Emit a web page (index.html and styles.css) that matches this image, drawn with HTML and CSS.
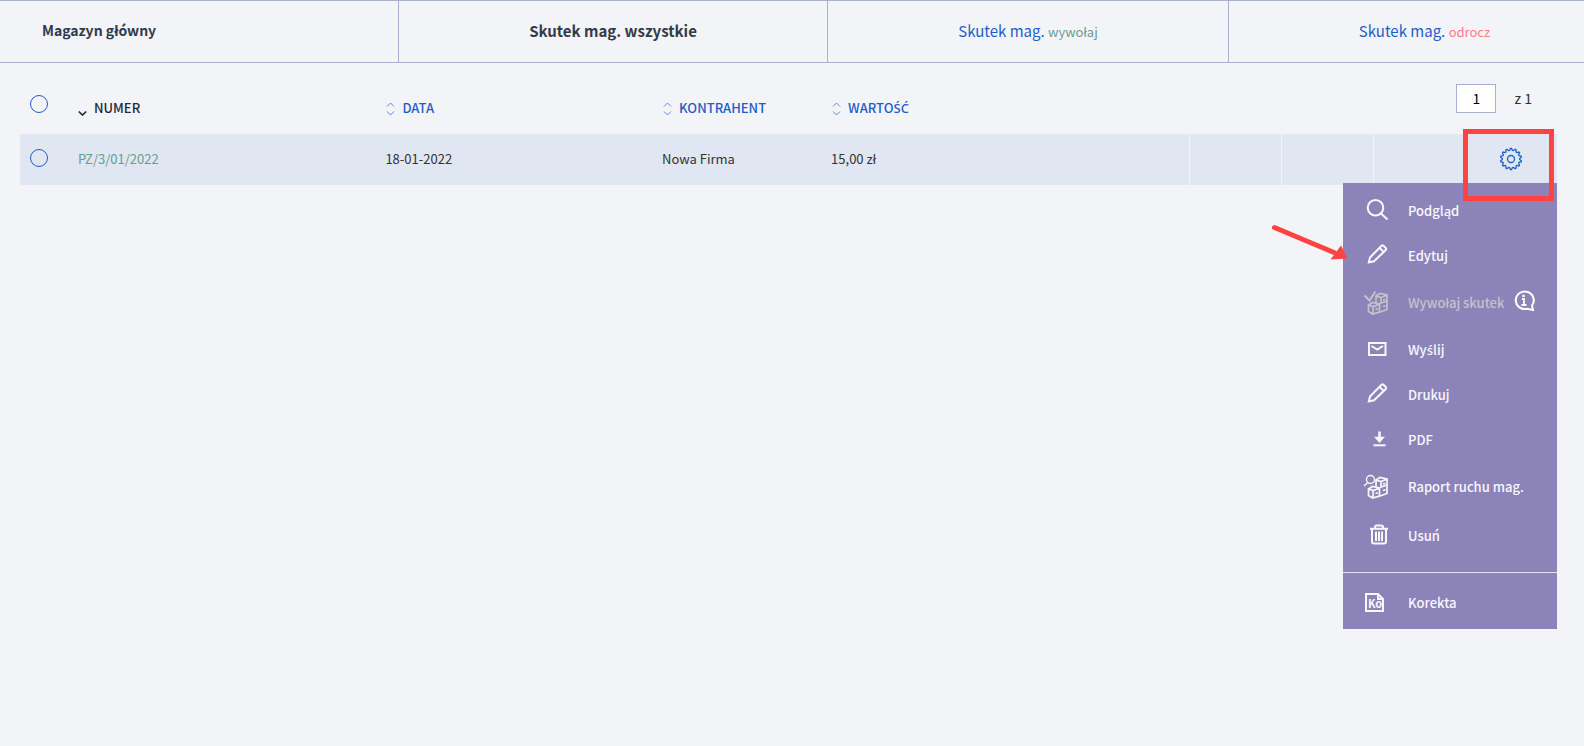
FILE: index.html
```html
<!DOCTYPE html>
<html lang="pl">
<head>
<meta charset="utf-8">
<meta name="viewport" content="width=device-width,initial-scale=1">
<title>Magazyn główny</title>
<link rel="stylesheet" href="styles.css">
</head>
<body>

<nav class="tabs">
    <div class="tab tab-title">Magazyn główny</div>
    <a class="tab active" href="#">Skutek mag. wszystkie</a>
    <a class="tab" href="#"><span>Skutek mag. <small class="green">wywołaj</small></span></a>
    <a class="tab tab-last" href="#"><span>Skutek mag. <small class="pink">odrocz</small></span></a>
</nav>

<main>
<table class="documents">
    <colgroup>
        <col class="col-check">
        <col class="col-number">
        <col class="col-date">
        <col class="col-client">
        <col>
        <col class="col-action">
        <col class="col-action">
        <col class="col-action">
        <col class="col-action">
    </colgroup>
    <thead>
        <tr>
            <th class="check"><input type="checkbox" aria-label="Zaznacz wszystkie"></th>
            <th>
                <button class="sort sorted">
                    <svg width="9" height="14" viewBox="0 0 9 14"><path d="M.8 9.500l3.700 3.500 3.700-3.500" stroke-width="1.700"/></svg>
                    NUMER
                </button>
            </th>
            <th>
                <button class="sort sort-both">
                    <svg width="9" height="14" viewBox="0 0 9 14"><path d="M1 4.500l3.500-3.500 3.500 3.500M1 9.500l3.500 3.500 3.500-3.500"/></svg>
                    DATA
                </button>
            </th>
            <th>
                <button class="sort sort-both">
                    <svg width="9" height="14" viewBox="0 0 9 14"><path d="M1 4.500l3.500-3.500 3.500 3.500M1 9.500l3.500 3.500 3.500-3.500"/></svg>
                    KONTRAHENT
                </button>
            </th>
            <th>
                <button class="sort sort-both">
                    <svg width="9" height="14" viewBox="0 0 9 14"><path d="M1 4.500l3.500-3.500 3.500 3.500M1 9.500l3.500 3.500 3.500-3.500"/></svg>
                    <span>WARTO<span class="accent">ŚĆ</span></span>
                </button>
            </th>
            <td colspan="4">
                <div class="pager">
                    <input type="text" value="1" aria-label="Strona">
                    <span>z 1</span>
                </div>
            </td>
        </tr>
    </thead>
    <tbody>
        <tr>
            <td class="check"><input type="checkbox" aria-label="Zaznacz PZ/3/01/2022"></td>
            <td><a class="green" href="#">PZ/3/01/2022</a></td>
            <td>18-01-2022</td>
            <td>Nowa Firma</td>
            <td>15,00 zł</td>
            <td class="action"></td>
            <td class="action"></td>
            <td class="action"></td>
            <td class="action options">
                <button class="gear" aria-label="Opcje">
                    <svg width="24" height="24" viewBox="0 0 24 24">
                        <circle cx="12" cy="12" r="3.500"/>
                        <path id="gear-teeth" d=""/>
                    </svg>
                </button>
                <div class="menu">
                    <button class="item">
                        <svg class="icon" viewBox="0 0 28 28"><circle cx="12.500" cy="10.800" r="7.800"/><path d="M18 16.500l6.500 6"/></svg>
                        Podgląd
                    </button>
                    <button class="item">
                        <svg class="icon" viewBox="0 0 28 28"><path d="M5.800 20.500l1.200-5L18.500 3.700q1-.8 2 0l2.300 2.300q.8 1 0 2L11 19.300zM16.500 5.800l4.300 4.300"/></svg>
                        Edytuj
                    </button>
                    <button class="item high" disabled>
                        <svg class="icon" viewBox="0 0 28 28">
                            <path d="M1.500 6.500l5 5 6-9"/>
                            <g class="boxes">
                                <path d="M13 13.500V7l4-2.500 7 1.500v14.500l-7 2.500M13 7l5 1.500 6-2.500M18 8.500V14l6-2M20 11l2.500-.8"/>
                                <path d="M5.500 16l4-2.500 7 1.500v8l-7 2-4-2.500zM5.500 16l5 1.500 6-2.500M10 17.500V25M12.500 20.500l2.500-.8M20 17.500l2.500-.8"/>
                            </g>
                        </svg>
                        Wywołaj skutek
                        <svg class="info" viewBox="0 0 22 22"><path d="M19 15.500a9 8.800 0 1 0-5 3.300l6 1.200z"/><path d="M9 9h2v5.500M8.500 15h5" stroke-width="1.800"/><path d="M10.500 4.800v2.200" stroke-width="2.400"/></svg>
                    </button>
                    <button class="item">
                        <svg class="icon" viewBox="0 0 28 28"><path d="M6 7h16.500v12H6zM8.500 10l5.700 3.500 5.800-3.500"/></svg>
                        <span>Wy<span class="accent">ś</span>lij</span>
                    </button>
                    <button class="item">
                        <svg class="icon" viewBox="0 0 28 28"><path d="M5.800 20.500l1.200-5L18.500 3.700q1-.8 2 0l2.300 2.300q.8 1 0 2L11 19.300zM16.500 5.800l4.300 4.300"/></svg>
                        Drukuj
                    </button>
                    <button class="item">
                        <svg class="icon" viewBox="0 0 28 28"><path d="M16.500 5.500v7" stroke-width="2.600"/><path d="M10.500 19.300h12"/><path class="solid" d="M11 10.700h11l-5.500 6.300z"/></svg>
                        PDF
                    </button>
                    <button class="item high">
                        <svg class="icon" viewBox="0 0 28 28">
                            <circle cx="7.500" cy="6.500" r="4" stroke-width="1.400"/><path d="M4.800 9.500L1 13" stroke-width="1.400"/>
                            <g class="boxes">
                                <path d="M13 13.500V7l4-2.500 7 1.500v14.500l-7 2.500M13 7l5 1.500 6-2.500M18 8.500V14l6-2M20 11l2.500-.8"/>
                                <path d="M5.500 16l4-2.500 7 1.500v8l-7 2-4-2.500zM5.500 16l5 1.500 6-2.500M10 17.500V25M12.500 20.500l2.500-.8M20 17.500l2.500-.8"/>
                            </g>
                        </svg>
                        Raport ruchu mag.
                    </button>
                    <button class="item higher">
                        <svg class="icon" viewBox="0 0 28 28"><path d="M7 6.700h18M12 7V5q0-1.500 1.500-1.500h5Q20 3.500 20 5V7M9 7v12.500q0 2 2 2h10q2 0 2-2V7M13 9.500V19M16 9.500V19M19 9.500V19"/></svg>
                        Usuń
                    </button>
                    <hr>
                    <button class="item highest">
                        <svg class="icon" viewBox="0 0 28 28"><path d="M3 5h12l5 5v12H3zM15 5v5h5"/><text x="5" y="19">Ko</text></svg>
                        Korekta
                    </button>
                </div>
                <div class="highlight"></div>
                <svg class="arrow" width="76" height="38" viewBox="0 0 76 38"><path d="M2.500 4.500L62 29.500" stroke-width="5" stroke-linecap="round"/><path class="head" d="M69 22.500L75.500 35.500 58.500 36.500z"/></svg>
            </td>
        </tr>
    </tbody>
</table>
</main>

<script>
// teeth of the gear button
var teeth = 14, d = '';
for (var i = 0; i < teeth * 4; i++) {
    var r = i % 4 < 2 ? 10.5 : 8.7;
    var a = (i - 0.5) / (teeth * 4) * Math.PI * 2 - Math.PI / 2;
    d += (i ? 'L' : 'M') + (12 + r * Math.cos(a)).toFixed(2) + ' ' + (12 + r * Math.sin(a)).toFixed(2);
}
document.getElementById('gear-teeth').setAttribute('d', d + 'z');
</script>
</body>
</html>
```
FILE: styles.css
```css
* {
    box-sizing: border-box;
}
body {
    min-height: 100vh;
    margin: 0;
    background: #f3f4f8;
    color: #333;
    font-family: "Noto Sans CJK JP", "Noto Sans", sans-serif;
    font-size: 13px;
    line-height: 20px;
}
a {
    color: #1e5ec8;
    text-decoration: none;
}
button {
    margin: 0;
    padding: 0;
    border: 0;
    background: none;
    font: inherit;
    cursor: pointer;
}
svg {
    flex: none;
    fill: none;
    stroke: currentColor;
}
.green {
    color: #689e8a;
}
.pink {
    color: #fd7b8a;
}
.accent {
    font-family: "Noto Sans", sans-serif;
}

/* tabs */
.tabs {
    display: grid;
    grid-template-columns: 399fr 429fr 401fr 355fr;
    height: 63px;
    border-top: 1px solid #a6b1cf;
    border-bottom: 1px solid #a6b1cf;
}
.tab {
    display: flex;
    align-items: center;
    justify-content: center;
    border-right: 1px solid #a6b1cf;
    font-size: 15px;
}
.tab small {
    font-size: 13px;
}
.tab-title {
    justify-content: flex-start;
    padding: 0 0 4px 42px;
    color: #323a4a;
    font-size: 14px;
    font-weight: bold;
}
.tab.active {
    padding-bottom: 2px;
    color: #323a4a;
    font-weight: bold;
}
.tab-last {
    padding-left: 36px;
    border-right: 0;
}

/* list of documents */
main {
    padding: 0 27px 0 20px;
}
.documents {
    width: 100%;
    table-layout: fixed;
    border-collapse: collapse;
}
.col-check {
    width: 58px;
}
.col-number {
    width: 20%;
}
.col-date {
    width: 18%;
}
.col-client {
    width: 11%;
}
.col-action {
    width: 92px;
}
th, td {
    padding: 0;
    text-align: left;
}
thead tr {
    height: 71px;
}
thead th {
    padding-top: 18px;
}
thead td {
    vertical-align: top;
}
tbody tr {
    height: 51px;
    background: #e0e6f2;
}
tbody td {
    padding-bottom: 2px;
}
.check {
    padding-left: 10px;
    vertical-align: middle;
}
thead .check {
    padding-top: 10px;
}
tbody .check {
    padding-bottom: 4px;
}
.check input {
    display: block;
    appearance: none;
    width: 18px;
    height: 18px;
    margin: 0;
    border: 1px solid #1e5ec8;
    border-radius: 50%;
}
.sort {
    display: flex;
    align-items: center;
    gap: 7px;
    color: #1e5ec8;
    font-weight: 500;
}
.sort svg {
    margin-top: 2px;
    opacity: .7;
}
.sort-both {
    padding-left: 1px;
}
.sorted {
    color: #222b38;
}
.sorted svg {
    opacity: 1;
}
.pager {
    display: flex;
    align-items: center;
    justify-content: flex-end;
    gap: 18px;
    padding: 21px 25px 0 0;
    font-size: 14px;
}
.pager input {
    width: 40px;
    height: 29px;
    padding: 0 0 2px;
    border: 1px solid #a6b1cf;
    background: #fff;
    font: inherit;
    text-align: center;
}
.pager span {
    padding-bottom: 2px;
}
.action {
    border-left: 1px solid #f3f4f8;
}
.options {
    position: relative;
}
.gear {
    display: block;
    width: 24px;
    height: 24px;
    margin: 0 auto;
    color: #1e5ec8;
}
.gear svg {
    display: block;
    stroke-width: 1.3;
}

/* options menu */
.menu {
    position: absolute;
    top: 49px;
    right: 0;
    width: 214px;
    padding-top: 5px;
    background: #8c84b9;
}
.item {
    display: flex;
    align-items: center;
    width: 100%;
    height: 45px;
    padding-left: 20px;
    color: #f8f7fc;
    font-weight: 500;
    white-space: nowrap;
}
.item:disabled {
    color: #c5c2c9;
}
.high {
    height: 49px;
}
.higher {
    height: 50px;
}
.highest {
    height: 56px;
    padding-top: 4px;
}
.icon {
    width: 28px;
    height: 28px;
    margin-right: 17px;
    stroke-width: 2;
}
.icon .boxes {
    stroke-width: 1.7;
}
.icon .solid {
    fill: currentColor;
    stroke: none;
}
.icon text {
    fill: currentColor;
    stroke: none;
    font-size: 11px;
    font-weight: bold;
}
.info {
    width: 22px;
    height: 22px;
    margin: 0 0 4px 9px;
    color: #fff;
    stroke-width: 2;
}
.menu hr {
    height: 1px;
    margin: 11px 0 0;
    border: 0;
    background: #e6e4f0;
}

/* marks drawn over the list */
.highlight {
    position: absolute;
    top: -5px;
    right: 3px;
    width: 91px;
    height: 72px;
    border: 5px solid #ff4343;
    pointer-events: none;
}
.arrow {
    position: absolute;
    top: 89px;
    right: 209px;
    color: #ff4343;
}
.arrow .head {
    fill: currentColor;
    stroke: none;
}
```
